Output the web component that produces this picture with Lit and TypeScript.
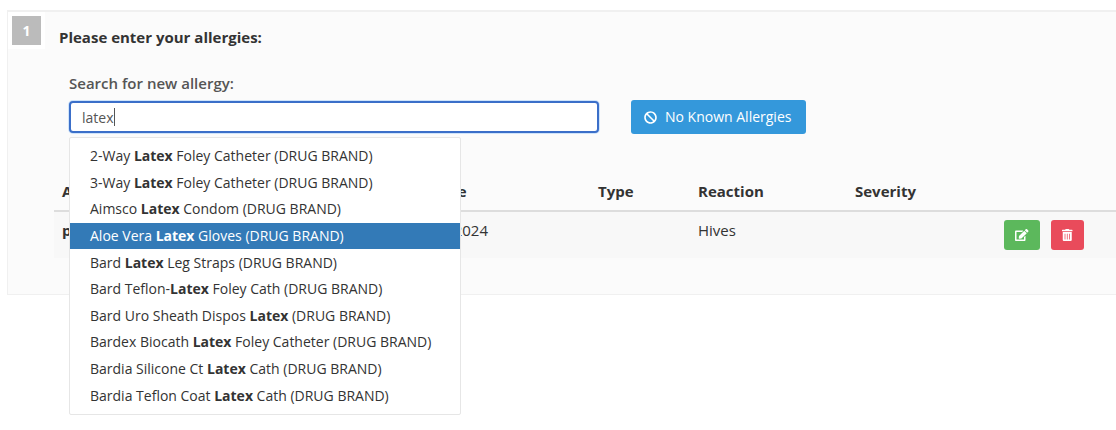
import { LitElement, html, css, svg } from "lit";
import { customElement, state } from "lit/decorators.js";
import { classMap } from "lit/directives/class-map.js";

const BAN = svg`<path d="M256 8C119.034 8 8 119.033 8 256s111.034 248 248 248 248-111.034 248-248S392.967 8 256 8zm130.108 117.892c65.448 65.448 70 165.481 20.677 235.637L150.47 105.216c70.204-49.356 170.226-44.735 235.638 20.676zM125.892 386.108c-65.448-65.448-70-165.481-20.677-235.637L361.53 406.784c-70.203 49.356-170.226 44.736-235.638-20.676z"/>`;
const EDIT = svg`<path d="M402.6 83.2l90.2 90.2c3.8 3.8 3.8 10 0 13.8L274.4 405.6l-92.8 10.3c-12.4 1.4-22.9-9.1-21.5-21.5l10.3-92.8L388.8 83.2c3.8-3.8 10-3.8 13.8 0zm162-22.9l-48.8-48.8c-15.2-15.2-39.9-15.2-55.2 0l-35.4 35.4c-3.8 3.8-3.8 10 0 13.8l90.2 90.2c3.8 3.8 10 3.8 13.8 0l35.4-35.4c15.2-15.3 15.2-40 0-55.2zM384 346.2V448H64V128h229.8c3.2 0 6.2-1.3 8.5-3.5l40-40c7.6-7.6 2.2-20.5-8.5-20.5H48C21.5 64 0 85.5 0 112v352c0 26.5 21.5 48 48 48h352c26.5 0 48-21.5 48-48V306.2c0-10.7-12.9-16-20.5-8.5l-40 40c-2.2 2.3-3.5 5.3-3.5 8.5z"/>`;
const TRASH = svg`<path d="M32 464a48 48 0 0 0 48 48h288a48 48 0 0 0 48-48V128H32zm272-256a16 16 0 0 1 32 0v224a16 16 0 0 1-32 0zm-96 0a16 16 0 0 1 32 0v224a16 16 0 0 1-32 0zm-96 0a16 16 0 0 1 32 0v224a16 16 0 0 1-32 0zM432 32H312l-9.4-18.7A24 24 0 0 0 281.1 0H166.8a23.72 23.72 0 0 0-21.4 13.3L136 32H16A16 16 0 0 0 0 48v32a16 16 0 0 0 16 16h416a16 16 0 0 0 16-16V48a16 16 0 0 0-16-16z"/>`;

// Each suggestion is split around the matched term.
const SUGGESTIONS: [string, string][] = [
  ["2-Way ", " Foley Catheter"],
  ["3-Way ", " Foley Catheter"],
  ["Aimsco ", " Condom"],
  ["Aloe Vera ", " Gloves"],
  ["Bard ", " Leg Straps"],
  ["Bard Teflon-", " Foley Cath"],
  ["Bard Uro Sheath Dispos ", ""],
  ["Bardex Biocath ", " Foley Catheter"],
  ["Bardia Silicone Ct ", " Cath"],
  ["Bardia Teflon Coat ", " Cath"],
];

@customElement("app-root")
export class AppRoot extends LitElement {
  @state() private active = 3;

  static styles = css`
    :host {
      display: block;
      box-sizing: border-box;
      min-height: 100vh;
      padding: 10px 0 0 7px;
      font-family: "Open Sans", "Noto Sans", sans-serif;
      font-size: 14px;
      line-height: 20px;
      color: #333;
    }
    * {
      box-sizing: border-box;
    }
    .panel {
      display: grid;
      grid-template-columns: 38px 1fr;
      column-gap: 8px;
      border: 1px solid #f0f0f0;
      border-top-width: 2px;
      border-right: 0;
      background: #fbfbfb;
      padding-bottom: 36px;
    }
    .step {
      justify-self: start;
      align-self: start;
      width: 37px;
      height: 37px;
      border: 4px solid #fff;
      background: #bbb;
      color: #fff;
      font-weight: 700;
      line-height: 29px;
      text-align: center;
    }
    .title {
      margin: 0;
      padding: 15px 0 0 5px;
      font-size: 15px;
      line-height: 20px;
      font-weight: 700;
    }
    .search {
      padding: 26px 0 0 15px;
    }
    .label {
      display: block;
      font-size: 15px;
      font-weight: 600;
      color: #555;
      margin-bottom: 7px;
    }
    .controls {
      display: flex;
      align-items: center;
      gap: 32px;
    }
    .combo {
      position: relative;
      flex: 0 1 530px;
    }
    .input {
      display: block;
      width: 100%;
      height: 32px;
      margin: 0;
      padding: 0 11px;
      border: 2px solid #3b6fc9;
      border-radius: 4px;
      outline: none;
      box-shadow: 0 0 0 1px #cfe4fb;
      background: #fff;
      color: #555;
      font: inherit;
      caret-color: transparent;
    }
    .caret {
      position: absolute;
      top: 7px;
      left: 45px;
      width: 1px;
      height: 18px;
      background: #555;
    }
    .menu {
      position: absolute;
      z-index: 2;
      top: 100%;
      left: 0;
      display: grid;
      grid-auto-rows: 1fr;
      min-width: 392px;
      min-height: 278px;
      margin: 4px 0 0;
      padding: 5px 0;
      list-style: none;
      white-space: nowrap;
      background: #fff;
      border: 1px solid #e6e6e6;
      border-radius: 2px;
    }
    .option {
      display: flex;
      align-items: center;
      padding: 0 20px;
      cursor: pointer;
    }
    .option.active {
      background: #337ab7;
      color: #fff;
    }
    .btn {
      display: inline-flex;
      align-items: center;
      justify-content: center;
      border: 0;
      border-radius: 3px;
      color: #fff;
      font: inherit;
      cursor: pointer;
    }
    .none {
      gap: 8px;
      height: 34px;
      padding: 0 15px 0 13px;
      background: #3498db;
    }
    .edit,
    .delete {
      height: 30px;
      padding: 0;
    }
    .edit {
      width: 36px;
      background: #5cb85c;
    }
    .delete {
      width: 33px;
      background: #e94b5b;
    }
    .icon {
      height: 13px;
      fill: currentColor;
    }
    .edit .icon,
    .delete .icon {
      height: 12px;
    }
    .table {
      width: 100%;
      margin-top: 40px;
      border-collapse: collapse;
      table-layout: fixed;
      text-align: left;
      font-size: 15px;
    }
    .date {
      width: 167px;
    }
    .type {
      width: 100px;
    }
    .reaction {
      width: 157px;
    }
    .severity {
      width: 149px;
    }
    .actions {
      width: 120px;
    }
    .head {
      padding: 7px 8px 9px;
      font-weight: 700;
      border-bottom: 2px solid #ddd;
    }
    .cell {
      padding: 8px;
      vertical-align: top;
      background: #f8f8f8;
      font-weight: 400;
    }
    .name {
      font-weight: 700;
    }
    .buttons {
      display: flex;
      gap: 11px;
    }
  `;

  render() {
    return html`
      <section class="panel">
        <div class="step">1</div>
        <div>
          <h1 class="title">Please enter your allergies:</h1>
          <div class="search">
            <label class="label" for="allergy">Search for new allergy:</label>
            <div class="controls">
              <div class="combo">
                <input id="allergy" class="input" type="text" value="latex" autocomplete="off"
                  role="combobox" aria-expanded="true" aria-controls="matches" />
                <span class="caret"></span>
                <ul id="matches" class="menu" role="listbox">
                  ${SUGGESTIONS.map(
                    ([before, after], i) => html`<li
                      class=${classMap({ option: true, active: i === this.active })}
                      role="option"
                      aria-selected=${i === this.active}
                      @mouseenter=${() => (this.active = i)}
                    ><span>${before}<strong>Latex</strong>${after} (DRUG BRAND)</span></li>`
                  )}
                </ul>
              </div>
              <button class="btn none" type="button">
                <svg class="icon" viewBox="0 0 512 512" aria-hidden="true">${BAN}</svg>
                No Known Allergies
              </button>
            </div>
          </div>
          <table class="table">
            <colgroup>
              <col /><col class="date" /><col class="type" /><col class="reaction" /><col class="severity" /><col class="actions" />
            </colgroup>
            <thead>
              <tr>
                <th class="head" scope="col">Allergy</th>
                <th class="head" scope="col">Date</th>
                <th class="head" scope="col">Type</th>
                <th class="head" scope="col">Reaction</th>
                <th class="head" scope="col">Severity</th>
                <td class="head"></td>
              </tr>
            </thead>
            <tbody>
              <tr>
                <th class="cell name" scope="row">penicillin</th>
                <td class="cell">04/2024</td>
                <td class="cell"></td>
                <td class="cell">Hives</td>
                <td class="cell"></td>
                <td class="cell">
                  <div class="buttons">
                    <button class="btn edit" type="button" aria-label="Edit">
                      <svg class="icon" viewBox="0 0 576 512" aria-hidden="true">${EDIT}</svg>
                    </button>
                    <button class="btn delete" type="button" aria-label="Delete">
                      <svg class="icon" viewBox="0 0 448 512" aria-hidden="true">${TRASH}</svg>
                    </button>
                  </div>
                </td>
              </tr>
            </tbody>
          </table>
        </div>
      </section>
    `;
  }
}
